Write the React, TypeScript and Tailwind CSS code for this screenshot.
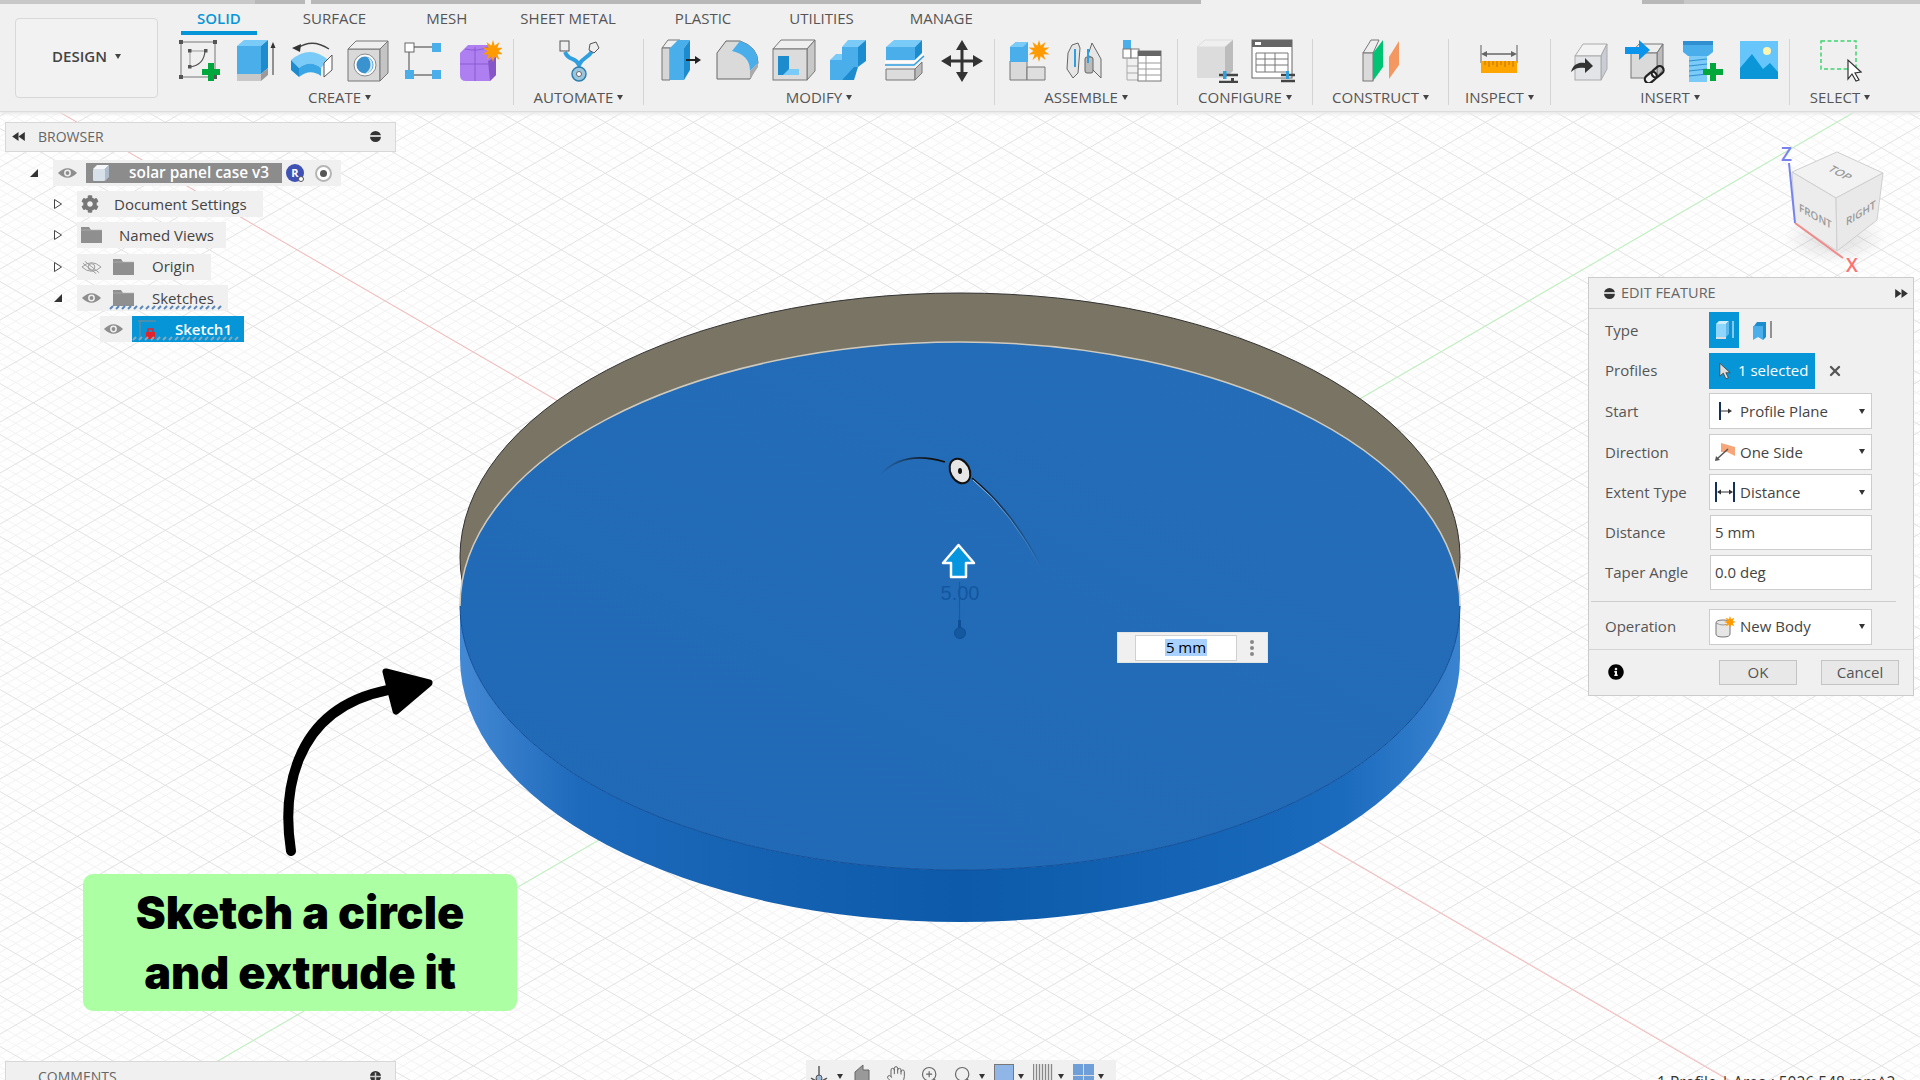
import React from 'react'
import { FaCog, FaInfoCircle } from 'react-icons/fa'
import { X, Hand, ZoomIn, Search } from 'lucide-react'

const SLOPE = 51 / 88

// grid lines of the ground plane, one family per direction
const gridLines = (() => {
  const lines: { y1: number; y2: number; major: boolean }[] = []
  for (let k = -110; k <= 115; k++) {
    const y0 = -75.5 + k * 10.2
    lines.push({ y1: y0, y2: y0 + 1920 * SLOPE, major: k % 5 === 0 })
  }
  for (let k = -45; k <= 175; k++) {
    const y0 = 422.1 + k * 10.2
    lines.push({ y1: y0, y2: y0 - 1920 * SLOPE, major: k % 5 === 0 })
  }
  return lines
})()

function starPoints(cx: number, cy: number, r1: number, r2: number, n: number) {
  const pts: string[] = []
  for (let i = 0; i < n * 2; i++) {
    const r = i % 2 === 0 ? r1 : r2
    const a = (Math.PI * i) / n - Math.PI / 2
    pts.push(`${(cx + r * Math.cos(a)).toFixed(1)},${(cy + r * Math.sin(a)).toFixed(1)}`)
  }
  return pts.join(' ')
}

const Star = ({ cx, cy, r }: { cx: number; cy: number; r: number }) => (
  <polygon points={starPoints(cx, cy, r, r * 0.5, 10)} fill="#ff9a00" />
)

const Ico = ({ children }: { children: React.ReactNode }) => (
  <svg viewBox="0 0 44 44" className="w-11 h-11 shrink-0">
    {children}
  </svg>
)

const SketchIcon = () => (
  <Ico>
    <rect x="3" y="3" width="34" height="35" fill="none" stroke="#777" />
    {[[1, 1], [35, 1], [1, 36], [35, 36]].map(([x, y]) => (
      <rect key={`${x}${y}`} x={x} y={y} width="4" height="4" fill="#555" />
    ))}
    <path d="M11 12H27M12 12V28" stroke="#999" fill="none" />
    <path d="M27 12Q26 26 12 28" stroke="#555" strokeWidth="1.2" fill="none" />
    <rect x="10" y="10" width="3.5" height="3.5" fill="#555" />
    <rect x="26" y="10" width="3.5" height="3.5" fill="#555" />
    <rect x="10" y="26" width="3.5" height="3.5" fill="#555" />
    <path d="M24 33H42M33 24V42" stroke="#00a83c" strokeWidth="6" />
  </Ico>
)

const ExtrudeIcon = () => (
  <Ico>
    <polygon points="3,7 27,7 27,35 3,35" fill="#4aaeea" />
    <polygon points="3,7 10,1 34,1 27,7" fill="#7acbf7" />
    <polygon points="27,7 34,1 34,29 27,35" fill="#1c8ccf" />
    <polygon points="3,35 27,35 27,42 3,42" fill="#c8c8c8" />
    <polygon points="27,35 34,29 34,36 27,42" fill="#9a9a9a" />
    <path d="M39 36V6" stroke="#333" strokeWidth="1" />
    <polygon points="39,3 36.5,9 41.5,9" fill="#333" />
  </Ico>
)

const RevolveIcon = () => (
  <Ico>
    <path d="M8 9Q22 -1 39 10" stroke="#444" strokeWidth="1.4" fill="none" />
    <polygon points="2,9 11,5 10,13" fill="#333" />
    <path d="M1 21Q20 5 38 21L31 29Q20 20 9 29Z" fill="#7acbf7" />
    <path d="M1 21L9 29V38L1 31Z" fill="#1c8ccf" />
    <path d="M9 29Q20 20 31 29V37Q20 29 9 38Z" fill="#3ba6e6" />
    <polygon points="34,24 42,16 42,31 34,38" fill="#fff" stroke="#555" />
  </Ico>
)

const HoleIcon = () => (
  <Ico>
    <polygon points="2,10 34,10 34,42 2,42" fill="#d9d9d9" stroke="#777" />
    <polygon points="2,10 10,2 42,2 34,10" fill="#efefef" stroke="#777" />
    <polygon points="34,10 42,2 42,34 34,42" fill="#c4c4c4" stroke="#777" />
    <circle cx="19" cy="26" r="11" fill="#fff" stroke="#888" />
    <circle cx="19" cy="26" r="8.5" fill="#3a93cf" />
    <path d="M21 18A8.5 8.5 0 0 1 19 34.5A10 10 0 0 0 21 18Z" fill="#cfe9f8" />
  </Ico>
)

const PatternIcon = () => (
  <Ico>
    <path d="M12 8H30M7 13V31M12 36H30" stroke="#777" strokeWidth="1.4" />
    <rect x="3" y="4" width="9" height="9" fill="#fff" stroke="#666" />
    <rect x="30" y="4" width="9" height="9" fill="#4aaeea" />
    <rect x="3" y="31" width="9" height="9" fill="#4aaeea" />
    <rect x="30" y="31" width="9" height="9" fill="#4aaeea" />
  </Ico>
)

const FormIcon = () => (
  <Ico>
    <path d="M10 6H30L38 18V36L32 42H8Q2 42 2 36V14Z" fill="#ad7ff0" />
    <path d="M30 22L38 18V36L32 42Z" fill="#8655c8" />
    <path d="M2 25H31M17 8V42M7 10Q20 13 30 8" stroke="#8a5dd0" fill="none" />
    <Star cx={35} cy={12} r={11} />
  </Ico>
)

const AutomateIcon = () => (
  <Ico>
    <path d="M8 13C12 23 18 17 22 26C26 17 30 21 36 11" stroke="#2f9fe0" strokeWidth="4" fill="none" />
    <path d="M22 24L18 34H26Z" fill="#2f9fe0" />
    <rect x="3" y="2" width="9" height="10" fill="#eee" stroke="#555" />
    <polygon points="33,5 39,3 42,9 37,14 32,11" fill="#eee" stroke="#555" />
    <circle cx="22" cy="35" r="7" fill="#9bc5dd" stroke="#2f7fae" strokeWidth="1.5" />
    <circle cx="22" cy="35" r="2.5" fill="#fff" stroke="#666" />
  </Ico>
)

const PressPullIcon = () => (
  <Ico>
    <polygon points="2,9 8,1 20,1 14,9" fill="#f0f0f0" stroke="#777" />
    <polygon points="2,9 10,9 10,41 2,41" fill="#d6d6d6" stroke="#777" />
    <polygon points="10,9 18,1 30,1 24,9 24,41 10,41" fill="#4aaeea" />
    <polygon points="24,9 30,1 30,31 24,41" fill="#1c8ccf" />
    <path d="M26 21H36" stroke="#222" strokeWidth="2" />
    <polygon points="41,21 35,17 35,25" fill="#222" />
  </Ico>
)

const FilletIcon = () => (
  <Ico>
    <path d="M1 14L10 2H24Q42 8 42 24L34 40H1Z" fill="#dadada" stroke="#666" />
    <path d="M16 12L24 2Q42 8 42 24L34 32Q34 16 16 12Z" fill="#4aaeea" />
    <path d="M34 32L42 24V28L34 40Z" fill="#aaa" />
  </Ico>
)

const ShellIcon = () => (
  <Ico>
    <polygon points="1,10 9,1 43,1 35,10" fill="#efefef" stroke="#777" />
    <polygon points="35,10 43,1 43,32 35,41" fill="#c8c8c8" stroke="#777" />
    <rect x="1" y="10" width="34" height="31" fill="#dcdcdc" stroke="#777" />
    <polygon points="6,17 17,17 17,30 27,30 27,36 6,36" fill="#1c8ccf" />
    <polygon points="17,30 27,30 27,36 11,36" fill="#7acbf7" />
  </Ico>
)

const CombineIcon = () => (
  <Ico>
    <polygon points="2,21 14,21 14,41 2,41" fill="#4aaeea" />
    <polygon points="14,8 30,8 30,28 14,28" fill="#4aaeea" />
    <polygon points="2,21 8,15 14,15 14,21" fill="#7acbf7" />
    <polygon points="14,8 20,1 38,1 30,8" fill="#7acbf7" />
    <polygon points="30,8 38,1 38,22 30,28" fill="#1c8ccf" />
    <polygon points="14,28 26,28 26,34 14,41" fill="#4aaeea" />
    <polygon points="26,28 30,28 26,41 14,41" fill="#1c8ccf" />
  </Ico>
)

const SplitIcon = () => (
  <Ico>
    <polygon points="2,8 10,1 38,1 31,8" fill="#7acbf7" />
    <rect x="2" y="8" width="29" height="13" fill="#4aaeea" />
    <polygon points="31,8 38,1 38,14 31,21" fill="#1c8ccf" />
    <path d="M1 26H30L40 17" stroke="#2f9fe0" strokeWidth="1.5" fill="none" />
    <path d="M1 23H30L40 14" stroke="#fff" strokeWidth="1.5" fill="none" />
    <polygon points="2,30 31,30 31,41 2,41" fill="#dcdcdc" stroke="#777" />
    <polygon points="31,30 38,23 38,34 31,41" fill="#bcbcbc" stroke="#777" />
  </Ico>
)

const MoveIcon = () => (
  <Ico>
    <path d="M22 8V36M8 22H36" stroke="#333" strokeWidth="3" />
    <polygon points="22,1 16,11 28,11" fill="#333" />
    <polygon points="22,43 16,33 28,33" fill="#333" />
    <polygon points="1,22 11,16 11,28" fill="#333" />
    <polygon points="43,22 33,16 33,28" fill="#333" />
  </Ico>
)

const ComponentIcon = () => (
  <Ico>
    <polygon points="2,22 19,22 19,41 2,41" fill="#d9d9d9" stroke="#777" />
    <polygon points="19,28 37,28 37,41 19,41" fill="#dedede" stroke="#777" />
    <polygon points="2,8 8,3 20,3 20,23 2,23" fill="#4aaeea" />
    <polygon points="2,8 8,3 20,3 15,8" fill="#7acbf7" />
    <Star cx={31} cy={12} r={11} />
  </Ico>
)

const JointIcon = () => (
  <Ico>
    <path d="M4 14L8 6L14 4L16 9L14 34L9 39L3 30Z" fill="#e6e6e6" stroke="#666" />
    <path d="M28 4L37 20V39L28 30V19L24 16Z" fill="#e6e6e6" stroke="#666" />
    <rect x="21" y="18" width="8" height="16" rx="2" fill="#bbb" stroke="#666" />
    <path d="M11 10V28M24 10V24" stroke="#2f9fe0" strokeWidth="2" />
  </Ico>
)

const TableTreeIcon = () => (
  <Ico>
    <rect x="3" y="1" width="8" height="9" fill="#4aaeea" />
    <rect x="3" y="10" width="8" height="9" fill="#fff" stroke="#777" />
    <rect x="11" y="10" width="8" height="9" fill="#fff" stroke="#777" />
    <path d="M7 19V41M7 27H18M7 34H18M7 41H18" stroke="#aaa" />
    <rect x="18" y="12" width="23" height="30" fill="#fff" stroke="#777" />
    <rect x="18" y="12" width="23" height="5" fill="#666" />
    <path d="M18 24H41M18 30H41M18 36H41M26 17V42" stroke="#999" />
  </Ico>
)

const ConfigIcon = () => (
  <Ico>
    <polygon points="2,8 10,1 38,1 30,8" fill="#efefef" stroke="#ddd" />
    <polygon points="30,8 38,1 38,32 30,39" fill="#bcbcbc" />
    <rect x="2" y="8" width="28" height="31" fill="#dcdcdc" />
    <path d="M24 36H43M24 43H43" stroke="#444" strokeWidth="2.4" />
    <rect x="28" y="32" width="3.5" height="8" fill="#2f9fe0" />
    <rect x="36" y="39" width="3" height="5" fill="#444" />
  </Ico>
)

const ConfigTableIcon = () => (
  <Ico>
    <rect x="1" y="1" width="40" height="38" fill="#fff" stroke="#666" />
    <rect x="1" y="1" width="40" height="7" fill="#666" />
    <rect x="4" y="3" width="6" height="3" fill="#fff" />
    <path d="M5 14H37V33H5ZM5 20H37M5 26H37M14 14V33M24 14V33" stroke="#777" fill="none" />
    <path d="M30 36H44M30 42H44" stroke="#444" strokeWidth="2.4" />
    <rect x="35" y="32" width="3" height="8" fill="#2f9fe0" />
  </Ico>
)

const PlaneIcon = () => (
  <Ico>
    <polygon points="4,14 12,1 20,1 14,14" fill="#eee" stroke="#777" />
    <rect x="4" y="14" width="10" height="28" fill="#dadada" stroke="#777" />
    <polygon points="14,14 24,1 24,28 14,42" fill="#00c473" />
    <polygon points="30,18 40,2 40,26 30,40" fill="#f29860" />
  </Ico>
)

const MeasureIcon = () => (
  <Ico>
    <path d="M3 6V24M39 6V24" stroke="#777" strokeWidth="1.2" />
    <path d="M7 15H35" stroke="#666" strokeWidth="1.5" />
    <polygon points="3,15 9,12 9,18" fill="#666" />
    <polygon points="39,15 33,12 33,18" fill="#666" />
    <rect x="3" y="22" width="36" height="12" fill="#ffa500" />
    <path d="M7 22V26M11 22V28M15 22V26M19 22V28M23 22V26M27 22V28M31 22V26M35 22V28" stroke="#b87700" />
  </Ico>
)

const DeriveIcon = () => (
  <Ico>
    <polygon points="6,17 14,5 38,5 32,17" fill="#f3f3f3" stroke="#aaa" />
    <polygon points="32,17 38,5 38,30 32,41" fill="#c9ced4" stroke="#aaa" />
    <rect x="6" y="17" width="26" height="24" fill="#e2e4e7" stroke="#aaa" />
    <path d="M2 33C4 25 10 23 16 24V19L24 27L16 34V29C10 28 6 29 2 33Z" fill="#333" />
  </Ico>
)

const LinkIcon = () => (
  <Ico>
    <polygon points="6,14 14,5 38,5 32,14" fill="#eee" stroke="#777" />
    <polygon points="32,14 38,5 38,30 32,39" fill="#bcbcbc" stroke="#777" />
    <rect x="6" y="14" width="26" height="25" fill="#dadada" stroke="#777" />
    <path d="M0 8H14V1L25 11L14 21V15H0Z" fill="#0a94ec" />
    <g transform="rotate(-40 30 35)" fill="#f0f0f0" stroke="#222" strokeWidth="2.2">
      <rect x="18" y="31" width="13" height="8" rx="4" />
      <rect x="27" y="31" width="13" height="8" rx="4" fill="none" />
    </g>
  </Ico>
)

const BoltIcon = () => (
  <Ico>
    <polygon points="2,2 32,2 32,13 27,17 7,17 2,13" fill="#4aaeea" />
    <rect x="2" y="2" width="30" height="4" fill="#2f8fd0" />
    <rect x="8" y="17" width="18" height="26" fill="#7acbf7" />
    <path d="M8 22L26 20M8 27L26 25M8 32L26 30M8 37L26 35" stroke="#2f8fd0" />
    <path d="M22 33H42M32 24V42" stroke="#00a83c" strokeWidth="6" />
  </Ico>
)

const PictureIcon = () => (
  <Ico>
    <rect x="3" y="2" width="38" height="38" fill="#66c6fb" />
    <circle cx="30" cy="12" r="4" fill="#fdf5b0" />
    <path d="M3 29L15 15L26 30L33 24L41 33V40H3Z" fill="#0b96d8" />
  </Ico>
)

const SelectIcon = () => (
  <Ico>
    <rect x="3" y="2" width="35" height="28" fill="none" stroke="#3dd46e" strokeWidth="1.5" strokeDasharray="4 2.5" />
    <path d="M30 21L30 40L34 35L38 42L41 41L37 34L43 33Z" fill="#fff" stroke="#333" strokeWidth="1.2" />
  </Ico>
)

const Caret = ({ className = 'border-t-[#444]' }: { className?: string }) => (
  <span className={`inline-block w-0 h-0 border-x-[3.5px] border-x-transparent border-t-[5px] ${className}`} />
)

const ToolGroup = ({ label, width, icons, iconShift = '', last }: { label: string; width: string; icons: React.ReactNode; iconShift?: string; last?: boolean }) => (
  <div className={`${width} h-[66px] shrink-0 flex flex-col items-center ${last ? '' : 'border-r border-[#d4d4d4]'}`}>
    <div className={`h-[51px] flex gap-3 ${iconShift}`}>{icons}</div>
    <div className="h-[15px] flex items-center gap-[4px] text-[15px] leading-none text-[#555]">
      {label}
      <Caret />
    </div>
  </div>
)

const EyeIcon = ({ off }: { off?: boolean }) => (
  <svg viewBox="0 0 22 14" className="w-[21px] h-[14px] shrink-0">
    {off ? (
      <>
        <path d="M1 7Q11 -2 21 7Q11 16 1 7Z" fill="none" stroke="#999" />
        <circle cx="11" cy="7" r="3.5" fill="none" stroke="#999" />
        <path d="M4 1L19 13M2 3L16 14" stroke="#999" />
      </>
    ) : (
      <>
        <path d="M1 7Q11 -3 21 7Q11 17 1 7Z" fill="#8e8e8e" />
        <circle cx="11" cy="7" r="3.6" fill="#f0f0f0" />
        <circle cx="11" cy="7" r="2" fill="#8e8e8e" />
      </>
    )}
  </svg>
)

const FolderIcon = () => (
  <svg viewBox="0 0 21 16" className="w-[21px] h-[16px] shrink-0">
    <path d="M0 0H8L10 3H21V16H0Z" fill="#8f8f8f" />
    <path d="M0 3H21" stroke="#bbb" strokeWidth="0.6" />
  </svg>
)

const Expand = ({ open }: { open?: boolean }) => (
  <svg viewBox="0 0 10 12" className="w-[10px] h-[12px]">
    {open ? <polygon points="1,10 9,10 9,2" fill="#333" /> : <polygon points="1.5,1.5 8.5,6 1.5,10.5" fill="#fff" stroke="#444" />}
  </svg>
)

// dashed underline the sketch rows carry, short slanted strokes
const DashWave = ({ className, count }: { className: string; count: number }) => (
  <svg viewBox={`0 0 ${count * 6} 5`} className={`absolute ${className}`}>
    {Array.from({ length: count }).map((_, i) => (
      <path key={i} d={`M${i * 6 + 1} 4L${i * 6 + 4} 1`} stroke="currentColor" strokeWidth="2" />
    ))}
  </svg>
)

const TreeRow = ({ className, arrow, children }: { className: string; arrow?: React.ReactNode; children: React.ReactNode }) => (
  <div className={`h-[26px] flex items-center ${className}`}>
    {arrow && <div className="w-[24px] flex justify-start">{arrow}</div>}
    <div className="relative h-[26px] flex items-center bg-[#f0f0f0]">{children}</div>
  </div>
)

const Browser = () => (
  <div className="absolute left-[5px] top-[10px] w-[391px]">
    <div className="h-[30px] pb-[2px] flex items-center bg-[#f0f0f0] border border-[#d8d8d8] text-[14px] text-[#666]">
      <svg viewBox="0 0 14 10" className="w-[13px] h-[9px] ml-[6px]">
        <polygon points="0,5 7,0 7,10" fill="#333" />
        <polygon points="7,5 14,0 14,10" fill="#333" />
      </svg>
      <span className="ml-[13px]">BROWSER</span>
      <span className="ml-auto mr-[14px] w-[11px] h-[11px] rounded-full bg-[#333] flex items-center">
        <span className="w-full h-[2px] bg-[#ccc]" />
      </span>
    </div>
    <div className="mt-2 flex flex-col gap-[5.2px] text-[15px] text-[#444]">
      <TreeRow className="ml-[24px]" arrow={<Expand open />}>
        <div className="w-[33px] pl-[4px]"><EyeIcon /></div>
        <div className="w-[196px] h-[20px] ml-0 flex items-center bg-[#8c8c8c] text-white text-[15.4px] font-semibold">
          <svg viewBox="0 0 18 18" className="w-[18px] h-[18px] ml-[6px]">
            <polygon points="1,5 5,1 17,1 13,5" fill="#f5f7fa" />
            <polygon points="13,5 17,1 17,13 13,17" fill="#aebccc" />
            <rect x="1" y="5" width="12" height="12" rx="1" fill="#d8e0ea" />
          </svg>
          <span className="ml-[19px] whitespace-nowrap">solar panel case v3</span>
        </div>
        <div className="relative ml-[4px] w-[18px] h-[18px] rounded-full bg-[#3f51b5] flex items-center justify-center text-white text-[11px] font-bold">
          R
          <span className="absolute right-0 bottom-0 w-[6px] h-[6px] rounded-full bg-white border border-[#555]" />
        </div>
        <div className="ml-[11px] mr-[9px] w-[17px] h-[17px] rounded-full bg-white border-2 border-[#b5b5b5] flex items-center justify-center">
          <span className="w-[7px] h-[7px] rounded-full bg-[#555]" />
        </div>
      </TreeRow>
      <TreeRow className="ml-[48px]" arrow={<Expand />}>
        <FaCog className="ml-[4px] w-[18px] h-[18px] text-[#777]" />
        <span className="ml-[15px] mr-[16px]">Document Settings</span>
      </TreeRow>
      <TreeRow className="ml-[48px]" arrow={<Expand />}>
        <div className="ml-[4px]"><FolderIcon /></div>
        <span className="ml-[17px] mr-[12px]">Named Views</span>
      </TreeRow>
      <TreeRow className="ml-[48px]" arrow={<Expand />}>
        <div className="ml-[4px]"><EyeIcon off /></div>
        <div className="ml-[11px]"><FolderIcon /></div>
        <span className="ml-[18px] mr-[16px]">Origin</span>
      </TreeRow>
      <TreeRow className="ml-[48px]" arrow={<Expand open />}>
        <div className="ml-[4px]"><EyeIcon /></div>
        <div className="ml-[11px]"><FolderIcon /></div>
        <span className="ml-[18px] mr-[14px]">Sketches</span>
        <DashWave count={19} className="left-[32px] bottom-[1px] w-[114px] h-[5px] text-[#5b86b8]" />
      </TreeRow>
      <TreeRow className="ml-[95px]">
        <div className="ml-[3px] mr-[8px]"><EyeIcon /></div>
        <div className="relative w-[112px] h-[26px] flex items-center bg-[#0696d7] text-white font-semibold">
          <svg viewBox="0 0 24 22" className="w-[24px] h-[22px] ml-[3px]">
            <path d="M3 3H21M5 3V20" stroke="#888" fill="none" />
            <rect x="11" y="14" width="9" height="7" fill="#e0242c" />
            <path d="M13 14V11H18V14" stroke="#e0242c" strokeWidth="1.5" fill="none" />
          </svg>
          <span className="ml-[16px]">Sketch1</span>
          <DashWave count={18} className="left-0 bottom-[1px] w-[108px] h-[5px] text-[#8aa9bf]" />
        </div>
      </TreeRow>
    </div>
  </div>
)

const Field = ({ label, children }: { label: string; children: React.ReactNode }) => (
  <div className="flex items-center">
    <span className="w-[104px] shrink-0 text-[#555]">{label}</span>
    {children}
  </div>
)

const Dropdown = ({ icon, text }: { icon: React.ReactNode; text: string }) => (
  <div className="w-[163px] h-[36px] flex items-center bg-white border border-[#ccc] text-[#444]">
    <div className="w-[30px] flex justify-center shrink-0">{icon}</div>
    <span>{text}</span>
    <Caret className="ml-auto mr-[6px] border-t-[#333]" />
  </div>
)

const TextInput = ({ value }: { value: string }) => (
  <div className="w-[162px] h-[35px] ml-[1px] flex items-center pl-[4px] bg-white border border-[#ccc] text-[#444]">{value}</div>
)

const EditFeature = () => (
  <div className="absolute left-[1588px] top-[165px] w-[326px] h-[419px] flex flex-col bg-[#f0f0f0] border border-[#ccc] text-[15px]">
    <div className="h-[31px] shrink-0 flex items-center border-b border-[#d4d4d4] text-[#666] text-[14.5px]">
      <span className="ml-[15px] w-[11px] h-[11px] rounded-full bg-[#333] flex items-center">
        <span className="w-full h-[2px] bg-[#ccc]" />
      </span>
      <span className="ml-[6px]">EDIT FEATURE</span>
      <svg viewBox="0 0 14 10" className="w-[13px] h-[9px] ml-auto mr-[5px]">
        <polygon points="7,5 0,0 0,10" fill="#333" />
        <polygon points="14,5 7,0 7,10" fill="#333" />
      </svg>
    </div>
    <div className="pl-[16px] pt-[3px] flex flex-col gap-[4.6px]">
      <Field label="Type">
        <div className="w-[30px] h-[36px] flex items-center justify-center bg-[#0696d7]">
          <svg viewBox="0 0 24 24" className="w-6 h-6">
            <polygon points="4,6 7,3 17,3 14,6" fill="#cdeeff" />
            <rect x="4" y="6" width="10" height="13" fill="#8ed6fb" />
            <polygon points="14,6 17,3 17,16 14,19" fill="#5cb8ea" />
            <rect x="4" y="19" width="10" height="2" fill="#ddd" />
            <path d="M21 20V3" stroke="#fff" />
          </svg>
        </div>
        <svg viewBox="0 0 24 24" className="ml-[11px] w-6 h-6">
          <path d="M4 8L7 4H16V19L13 22V9L4 9Z" fill="#1c8ccf" />
          <path d="M3 8H13V22L8 19L3 22Z" fill="#4aaeea" />
          <path d="M21 20V3" stroke="#333" />
        </svg>
      </Field>
      <Field label="Profiles">
        <div className="w-[106px] h-[36px] flex items-center bg-[#0696d7] text-white">
          <svg viewBox="0 0 14 20" className="ml-[10px] w-[12px] h-[18px]">
            <path d="M1 1V16L5 12.5L8 19L11 18L8 12H13Z" fill="#ddd" stroke="#444" />
          </svg>
          <span className="ml-[7px] whitespace-nowrap">1 selected</span>
        </div>
        <X className="ml-[12px] w-[16px] h-[16px] text-[#555]" strokeWidth={3.5} />
      </Field>
      <Field label="Start">
        <Dropdown
          text="Profile Plane"
          icon={
            <svg viewBox="0 0 16 20" className="w-4 h-5">
              <path d="M3 1V19" stroke="#12305a" strokeWidth="2" />
              <path d="M4 10H12" stroke="#333" />
              <polygon points="15,10 11,7.5 11,12.5" fill="#333" />
            </svg>
          }
        />
      </Field>
      <Field label="Direction">
        <Dropdown
          text="One Side"
          icon={
            <svg viewBox="0 0 22 20" className="w-[22px] h-5">
              <polygon points="7,1 21,5 21,14 13,10 7,10" fill="#f7a67a" />
              <path d="M3 17L14 7" stroke="#555" strokeWidth="1.5" />
              <polygon points="1,19 6,18 2,14" fill="#555" />
            </svg>
          }
        />
      </Field>
      <Field label="Extent Type">
        <Dropdown
          text="Distance"
          icon={
            <svg viewBox="0 0 22 20" className="w-[22px] h-5">
              <path d="M2 0V20M20 0V20" stroke="#12305a" strokeWidth="2" />
              <path d="M4 10H18" stroke="#333" />
              <polygon points="3,10 7,7.5 7,12.5" fill="#333" />
              <polygon points="19,10 15,7.5 15,12.5" fill="#333" />
            </svg>
          }
        />
      </Field>
      <Field label="Distance">
        <TextInput value="5 mm" />
      </Field>
      <Field label="Taper Angle">
        <TextInput value="0.0 deg" />
      </Field>
    </div>
    <div className="ml-[2px] mr-[17px] mt-[11px] border-t border-[#ccc]" />
    <div className="pl-[16px] pt-[7px] pb-[4px]">
      <Field label="Operation">
        <Dropdown
          text="New Body"
          icon={
            <svg viewBox="0 0 22 22" className="w-[22px] h-[22px]">
              <path d="M2 7Q2 4 9 4Q16 4 16 7V18Q16 21 9 21Q2 21 2 18Z" fill="#e6e6e6" stroke="#777" />
              <path d="M2 7Q9 11 16 7" stroke="#999" fill="none" />
              <polygon points={starPoints(16, 6, 6, 3, 8)} fill="#ff9a00" />
            </svg>
          }
        />
      </Field>
    </div>
    <div className="flex-1 flex items-center border-t border-[#d4d4d4] text-[#555]">
      <FaInfoCircle className="ml-[19px] w-[16px] h-[16px] text-black" />
      <div className="ml-[95px] w-[78px] h-[25px] flex items-center justify-center bg-[#e8e8e8] border border-[#c4c4c4]">OK</div>
      <div className="ml-[24px] w-[78px] h-[25px] flex items-center justify-center bg-[#e8e8e8] border border-[#c4c4c4]">Cancel</div>
    </div>
  </div>
)

const Viewport = () => (
  <svg viewBox="0 112 1920 968" className="absolute inset-0 w-[1920px] h-[968px]">
    <defs>
      <linearGradient id="side" x1="0" x2="1" y1="0" y2="0">
        <stop offset="0" stopColor="#4489d4" />
        <stop offset="0.12" stopColor="#1d69bb" />
        <stop offset="0.5" stopColor="#0c5aa9" />
        <stop offset="0.88" stopColor="#1a6abd" />
        <stop offset="1" stopColor="#3a83d0" />
      </linearGradient>
      <linearGradient id="top" x1="0" x2="1" y1="1" y2="0">
        <stop offset="0" stopColor="#2069b6" />
        <stop offset="1" stopColor="#256db8" />
      </linearGradient>
      <linearGradient id="arcIn" gradientUnits="userSpaceOnUse" x1="880" x2="930" y1="0" y2="0">
        <stop offset="0" stopColor="#111" stopOpacity="0" />
        <stop offset="1" stopColor="#111" />
      </linearGradient>
      <linearGradient id="arcOut" gradientUnits="userSpaceOnUse" x1="975" x2="1042" y1="0" y2="0">
        <stop offset="0" stopColor="#111" />
        <stop offset="1" stopColor="#111" stopOpacity="0" />
      </linearGradient>
      <linearGradient id="arcLight" gradientUnits="userSpaceOnUse" x1="975" x2="1042" y1="0" y2="0">
        <stop offset="0" stopColor="#c6d4e4" />
        <stop offset="1" stopColor="#c6d4e4" stopOpacity="0" />
      </linearGradient>
      <radialGradient id="cubeShadow">
        <stop offset="0" stopColor="#000" stopOpacity="0.14" />
        <stop offset="1" stopColor="#000" stopOpacity="0" />
      </radialGradient>
    </defs>
    <rect x="0" y="112" width="1920" height="968" fill="#fefefe" />
    {gridLines.filter((l) => !l.major).map((l, i) => (
      <line key={i} x1="0" x2="1920" y1={l.y1} y2={l.y2} stroke="#f3f3f3" />
    ))}
    {gridLines.filter((l) => l.major).map((l, i) => (
      <line key={i} x1="0" x2="1920" y1={l.y1} y2={l.y2} stroke="#e2e2e2" />
    ))}
    <line x1="0" y1={153 - 130 * 0.58} x2="1920" y2={153 + 1790 * 0.58} stroke="#f7b9b9" />
    <line x1="0" y1={1061 + 218 * 0.58} x2="1920" y2={1061 - 1702 * 0.58} stroke="#b8f5b8" />

    {/* disc */}
    <ellipse cx="960" cy="557" rx="500" ry="264" fill="#7a7464" stroke="#333" strokeWidth="1" />
    <path d="M460 606A500 264 0 0 0 1460 606V658A500 264 0 0 1 460 658Z" fill="url(#side)" />
    <ellipse cx="960" cy="606" rx="500" ry="264" fill="url(#top)" />
    <path d="M460 606A500 264 0 0 1 1460 606" fill="none" stroke="#cfcabd" strokeWidth="1.5" />
    <path d="M460 606A500 264 0 0 0 1460 606" fill="none" stroke="#124f98" strokeWidth="1" />

    {/* highlighted arc and manipulators */}
    <path d="M882 473Q905 450 945 462" stroke="url(#arcIn)" strokeWidth="1.6" fill="none" />
    <path d="M972 478Q1012 510 1042 568" stroke="url(#arcOut)" strokeWidth="1.5" fill="none" />
    <path d="M973 480Q1012 512 1042 570" stroke="url(#arcLight)" strokeWidth="0.8" fill="none" />
    <ellipse cx="960" cy="471" rx="9.5" ry="13" transform="rotate(-28 960 471)" fill="#e6e6e6" stroke="#111" strokeWidth="2" />
    <ellipse cx="960" cy="471" rx="2" ry="3" fill="#111" />
    <path d="M959.5 582V630" stroke="#1659a6" strokeWidth="1.2" />
    <path d="M959.5 620V628" stroke="#0f4f98" strokeWidth="3" />
    <circle cx="960" cy="633" r="5.5" fill="#14599f" stroke="#0f4f98" />
    <text x="960" y="600" textAnchor="middle" fontFamily="Liberation Sans, sans-serif" fontSize="20" fill="#12579f">5.00</text>
    <path d="M958.5 545L974 563H966V577H951V563H943Z" fill="#0696e0" stroke="#fff" strokeWidth="2.5" strokeLinejoin="round" />

    {/* view cube */}
    <ellipse cx="1835" cy="238" rx="52" ry="26" fill="url(#cubeShadow)" />
    <polygon points="1792,172 1837,152 1883,173 1836,198" fill="#f2f2f2" stroke="#cfcfcf" />
    <polygon points="1792,172 1836,198 1837,251 1795,223" fill="#ececec" stroke="#cfcfcf" />
    <polygon points="1836,198 1883,173 1877,220 1837,251" fill="#e9e9e9" stroke="#cfcfcf" />
    <text transform="matrix(.85 .45 -.75 .55 1827 170)" fontFamily="Open Sans, sans-serif" fontWeight="600" fontSize="12" fill="#999">TOP</text>
    <text transform="matrix(.9 .5 0 1 1799 211)" fontFamily="Open Sans, sans-serif" fontWeight="600" fontSize="11" fill="#999">FRONT</text>
    <text transform="matrix(.9 -.55 0 1 1846 226)" fontFamily="Open Sans, sans-serif" fontWeight="600" fontSize="11" fill="#999">RIGHT</text>
    <path d="M1789 163L1795 223" stroke="#7683ef" strokeWidth="2" />
    <path d="M1795 223L1843 258" stroke="#f18a8a" strokeWidth="2" />
    <text x="1781" y="161" fontFamily="Open Sans, sans-serif" fontSize="19" fontWeight="600" fill="#7683ef">Z</text>
    <text x="1846" y="272" fontFamily="Open Sans, sans-serif" fontSize="19" fontWeight="600" fill="#ff7070">X</text>

    {/* callout arrow */}
    <path d="M291 851C283 800 288 710 388 690" stroke="#000" strokeWidth="10" strokeLinecap="round" fill="none" />
    <polygon points="386,672 429,683 396,711" fill="#000" stroke="#000" strokeWidth="7" strokeLinejoin="round" />
  </svg>
)

const DimensionInput = () => (
  <div className="absolute left-[1117px] top-[520px] w-[151px] h-[31px] flex items-center bg-[#f0f0f0] border border-[#e4e4e4]">
    <div className="ml-[17px] w-[102px] h-[26px] flex items-center justify-center bg-white border border-[#d0d0d0] text-[15px] text-black">
      <span className="bg-[#a8d1ff] leading-[17px] px-[1px]">5 mm</span>
    </div>
    <div className="ml-[13px] flex flex-col gap-[2px]">
      <span className="w-[4px] h-[4px] rounded-full bg-[#888]" />
      <span className="w-[4px] h-[4px] rounded-full bg-[#888]" />
      <span className="w-[4px] h-[4px] rounded-full bg-[#888]" />
    </div>
  </div>
)

const NavBar = () => (
  <div className="absolute left-[806px] top-[948px] w-[310px] h-[28px] flex items-start pt-[4px] bg-[#f0f0f0] text-[#666]">
    <svg viewBox="0 0 20 24" className="ml-[3px] w-[20px] h-[24px]">
      <path d="M10 2V22M2 14Q10 20 18 14" stroke="#555" fill="none" strokeWidth="1.4" />
      <circle cx="10" cy="14" r="3" fill="#9db7d6" stroke="#555" />
    </svg>
    <Caret className="ml-[8px] mt-[10px] border-t-[#333]" />
    <svg viewBox="0 0 18 24" className="ml-[10px] w-[18px] h-[24px]">
      <path d="M2 8L10 1V6H16V24H2Z" fill="#999" stroke="#666" />
    </svg>
    <Hand className="ml-[15px] w-[20px] h-[22px]" strokeWidth={1.2} />
    <ZoomIn className="ml-[14px] w-[20px] h-[22px]" strokeWidth={1.4} />
    <Search className="ml-[13px] w-[20px] h-[22px]" strokeWidth={1.4} />
    <Caret className="ml-[6px] mt-[10px] border-t-[#333]" />
    <div className="ml-[9px] w-[20px] h-[22px] bg-[#8fb6e6] border border-[#777]" />
    <Caret className="ml-[4px] mt-[10px] border-t-[#333]" />
    <div className="ml-[9px] w-[20px] h-[22px] bg-[repeating-linear-gradient(90deg,#888_0,#888_1px,#ddd_1px,#ddd_3px)]" />
    <Caret className="ml-[5px] mt-[10px] border-t-[#333]" />
    <div className="ml-[9px] w-[21px] h-[22px] grid grid-cols-2 gap-[1px] bg-[#ddd]">
      <span className="bg-[#6f9fd8]" />
      <span className="bg-[#6f9fd8]" />
      <span className="bg-[#6f9fd8]" />
      <span className="bg-[#6f9fd8]" />
    </div>
    <Caret className="ml-[4px] mt-[10px] border-t-[#333]" />
  </div>
)

export default function App() {
  return (
    <div className="relative w-[1920px] h-[1080px] overflow-hidden flex flex-col bg-white font-['Open_Sans',sans-serif]">
      <header className="relative z-10 h-[112px] shrink-0 bg-[#f0f0f0] border-b border-[#dcdcdc] shadow-[0_2px_3px_#e8e8e8]">
        <div className="h-[4px] flex">
          <div className="w-[255px] bg-[#c8c8c8]" />
          <div className="w-[50px] bg-[#b8b8b8]" />
          <div className="w-[6px]" />
          <div className="w-[890px] bg-[#b8b8b8]" />
          <div className="w-[441px]" />
          <div className="w-[42px] bg-[#b8b8b8]" />
          <div className="flex-1 bg-[#c8c8c8]" />
        </div>
        <div className="flex">
          <div className="ml-[15px] mt-[14px] w-[143px] h-[80px] pb-[3px] flex items-center justify-center gap-[8px] bg-[#f2f2f2] border border-[#d8d8d8] rounded text-[15px] font-semibold text-[#444]">
            DESIGN
            <Caret />
          </div>
          <div className="ml-[8px]">
            <nav className="h-[31px] flex items-end text-[15px] text-[#555]">
              <span className="ml-[15px] h-[27px] px-[16px] border-b-4 border-[#0696d7] text-[#0696d7] font-semibold leading-[20px]">SOLID</span>
              <span className="h-[27px] pl-[46px] pr-[30px] leading-[20px]">SURFACE</span>
              <span className="h-[27px] pl-[30px] pr-[25px] leading-[20px]">MESH</span>
              <span className="h-[27px] pl-[28px] pr-[29px] leading-[20px]">SHEET METAL</span>
              <span className="h-[27px] pl-[30px] pr-[29px] leading-[20px]">PLASTIC</span>
              <span className="h-[27px] pl-[29px] pr-[28px] leading-[20px]">UTILITIES</span>
              <span className="h-[27px] pl-[28px] pr-[29px] leading-[20px]">MANAGE</span>
            </nav>
            <div className="mt-[4px] flex">
              <ToolGroup label="CREATE" width="w-[348px]" icons={<><SketchIcon /><ExtrudeIcon /><RevolveIcon /><HoleIcon /><PatternIcon /><FormIcon /></>} />
              <ToolGroup label="AUTOMATE" width="w-[130px]" icons={<AutomateIcon />} />
              <ToolGroup label="MODIFY" width="w-[351px]" iconShift="ml-[5px]" icons={<><PressPullIcon /><FilletIcon /><ShellIcon /><CombineIcon /><SplitIcon /><MoveIcon /></>} />
              <ToolGroup label="ASSEMBLE" width="w-[183px]" icons={<><ComponentIcon /><JointIcon /><TableTreeIcon /></>} />
              <ToolGroup label="CONFIGURE" width="w-[135px]" icons={<><ConfigIcon /><ConfigTableIcon /></>} />
              <ToolGroup label="CONSTRUCT" width="w-[136px]" icons={<PlaneIcon />} />
              <ToolGroup label="INSPECT" width="w-[102px]" icons={<MeasureIcon />} />
              <ToolGroup label="INSERT" width="w-[239px]" iconShift="ml-[9px]" icons={<><DeriveIcon /><LinkIcon /><BoltIcon /><PictureIcon /></>} />
              <ToolGroup label="SELECT" width="w-[100px]" icons={<SelectIcon />} last />
            </div>
          </div>
        </div>
      </header>

      <main className="relative flex-1">
        <Viewport />
        <Browser />
        <EditFeature />
        <DimensionInput />
        <div className="absolute left-[83px] top-[762px] w-[434px] h-[137px] flex flex-col items-center justify-center rounded-[10px] bg-[#adffa3] font-['Inter',sans-serif] font-black text-[45px] leading-[60px] text-black">
          <span>Sketch a circle</span>
          <span>and extrude it</span>
        </div>
        <div className="absolute left-[5px] top-[949px] w-[391px] h-[30px] flex items-center bg-[#f0f0f0] border border-[#d8d8d8] text-[14px] text-[#666]">
          <span className="ml-[32px]">COMMENTS</span>
          <svg viewBox="0 0 11 11" className="ml-auto mr-[14px] w-[11px] h-[11px]">
            <circle cx="5.5" cy="5.5" r="5.5" fill="#333" />
            <path d="M0 5.5H11M5.5 1.5V9.5" stroke="#ccc" strokeWidth="1.5" />
          </svg>
        </div>
        <NavBar />
        <div className="absolute left-[1657px] top-[960px] text-[15.5px] leading-[20px] text-[#333] whitespace-nowrap">1 Profile | Area : 5026.548 mm^2</div>
      </main>
    </div>
  )
}
